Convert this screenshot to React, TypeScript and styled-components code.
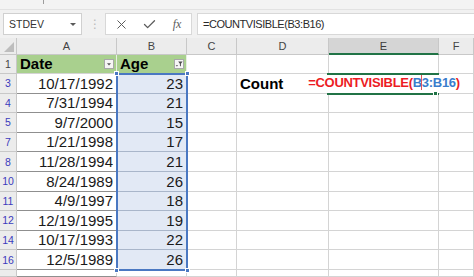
import styled, { createGlobalStyle } from 'styled-components';
import { X, Check } from 'lucide-react';

const GlobalStyle = createGlobalStyle`
  html, body {
    margin: 0;
    padding: 0;
    background: #ffffff;
    overflow: hidden;
  }
  body {
    font-family: 'Liberation Sans', Arial, sans-serif;
  }
`;

interface DataRow {
    n: number;
    date: string;
    age: number;
}

const rows: DataRow[] = [
    { n: 3, date: '10/17/1992', age: 23 },
    { n: 4, date: '7/31/1994', age: 21 },
    { n: 5, date: '9/7/2000', age: 15 },
    { n: 7, date: '1/21/1998', age: 17 },
    { n: 8, date: '11/28/1994', age: 21 },
    { n: 10, date: '8/24/1989', age: 26 },
    { n: 11, date: '4/9/1997', age: 18 },
    { n: 12, date: '12/19/1995', age: 19 },
    { n: 14, date: '10/17/1993', age: 22 },
    { n: 16, date: '12/5/1989', age: 26 },
];

const columns = ['A', 'B', 'C', 'D', 'E', 'F'];

const FilterButton = ({ active }: { active?: boolean }) => (
    <FilterBox viewBox="0 0 10 10" width={10} height={10}>
        <rect x="0.5" y="0.5" width="9" height="9" fill="#f6f6f6" stroke="#a8a8a8" />
        {active ? (
            <>
                <path d="M4.2 2.6h4.4L6.9 4.8v2.6l-1-0.7V4.8z" fill="#4d4d4d" />
                <path d="M1.6 6.2h2.6L2.9 7.6z" fill="#4d4d4d" />
            </>
        ) : (
            <path d="M3 4.2h4L5 6.4z" fill="#555" />
        )}
    </FilterBox>
);

const App = () => {
    return (
        <Page>
            <GlobalStyle />
            <Ribbon>
                <RibbonTick />
            </Ribbon>
            <FormulaBar>
                <NameBox>
                    STDEV
                    <Caret />
                </NameBox>
                <Grip>⋮</Grip>
                <FxBox>
                    <IconSlot>
                        <X size={15} strokeWidth={1.6} color="#5c5c5c" />
                    </IconSlot>
                    <IconSlot>
                        <Check size={15} strokeWidth={2.1} color="#5c5c5c" />
                    </IconSlot>
                    <IconSlot>
                        <Fx>fx</Fx>
                    </IconSlot>
                </FxBox>
                <FormulaInput>=COUNTVISIBLE(B3:B16)</FormulaInput>
            </FormulaBar>

            <Sheet>
                <Corner>
                    <CornerMark />
                </Corner>
                {columns.map((c) => (
                    <ColHead key={c} $active={c === 'E'}>
                        {c}
                    </ColHead>
                ))}

                <RowHead>1</RowHead>
                <TitleCell>
                    Date
                    <FilterButton />
                </TitleCell>
                <TitleCell>
                    Age
                    <FilterButton active />
                </TitleCell>
                <Cell />
                <Cell />
                <Cell />
                <Cell />

                {rows.map((r) => (
                    <Row key={r.n} row={r} />
                ))}

                <RowHead $filtered />
                <Cell $line="#8f8f8f" />
                <Cell />
                <Cell />
                <Cell />
                <Cell />
                <Cell />

                <Selection>
                    <Handle $top $left />
                    <Handle $top />
                    <Handle $left />
                    <Handle />
                </Selection>
                <ActiveCell>
                    <FillHandle />
                </ActiveCell>
            </Sheet>
        </Page>
    );
};

const Row = ({ row }: { row: DataRow }) => {
    const first = row.n === 3;
    return (
        <>
            <RowHead $filtered>{row.n}</RowHead>
            <Cell $align="flex-end" $line="#8f8f8f">
                {row.date}
            </Cell>
            <Cell $align="flex-end" $bg="#e2e9f5" $line="#a9b6ca">
                {row.age}
            </Cell>
            <Cell />
            <Cell $noRight={first}>{first && <Label>Count</Label>}</Cell>
            <Cell $noRight={first} $align={first ? 'center' : undefined}>
                {first && (
                    <FormulaText>
                        =COUNTVISIBLE(<RefText>B<Cursor />3:B16</RefText>)
                    </FormulaText>
                )}
            </Cell>
            <Cell />
        </>
    );
};

export default App;

const Page = styled.div`
    width: 474px;
    height: 277px;
    overflow: hidden;
    background: #ffffff;
    display: flex;
    flex-direction: column;
`;

const Ribbon = styled.div`
    height: 10px;
    background: #f3f3f3;
    border-bottom: 1px solid #e2e2e2;
    box-sizing: border-box;
    padding-left: 43px;
`;

const RibbonTick = styled.div`
    width: 1px;
    height: 4px;
    background: #9c9c9c;
`;

const FormulaBar = styled.div`
    height: 28px;
    box-sizing: border-box;
    background: #f1f1f1;
    display: flex;
    align-items: center;
    padding-left: 3px;
`;

const NameBox = styled.div`
    width: 79px;
    height: 22px;
    box-sizing: border-box;
    background: #ffffff;
    border: 1px solid #d0d0d0;
    display: flex;
    align-items: center;
    justify-content: space-between;
    padding: 0 5px 0 5px;
    font-size: 10.5px;
    color: #333333;
`;

const Caret = styled.span`
    width: 0;
    height: 0;
    border-left: 3px solid transparent;
    border-right: 3px solid transparent;
    border-top: 3px solid #5a5a5a;
`;

const Grip = styled.div`
    width: 2px;
    margin: 0 9px 0 12px;
    display: flex;
    justify-content: center;
    font-family: 'DejaVu Sans', sans-serif;
    font-size: 12px;
    color: #b9b9b9;
`;

const FxBox = styled.div`
    width: 87px;
    height: 22px;
    box-sizing: border-box;
    background: #ffffff;
    border: 1px solid #d8d8d8;
    display: flex;
    align-items: center;
    gap: 12px;
    padding-left: 7px;
`;

const IconSlot = styled.div`
    width: 16px;
    flex: none;
    display: flex;
    justify-content: center;
    align-items: center;
    & > svg {
        flex: none;
    }
`;

const Fx = styled.span`
    font-family: 'Liberation Serif', 'Times New Roman', serif;
    font-style: italic;
    font-size: 12px;
    color: #5c5c5c;
`;

const FormulaInput = styled.div`
    flex: 1;
    margin-left: 5px;
    height: 22px;
    box-sizing: border-box;
    background: #ffffff;
    border: 1px solid #d8d8d8;
    border-right: none;
    display: flex;
    align-items: center;
    padding-left: 5px;
    font-size: 11px;
    letter-spacing: -0.45px;
    color: #2a2a2a;
`;

const Sheet = styled.div`
    position: relative;
    flex: 1;
    display: grid;
    grid-template-columns: 17px 100px 70px 50px 92px 110px 1fr;
    grid-template-rows: 17px 19px repeat(10, 19.6px) 1fr;
    background: #ffffff;
`;

const Corner = styled.div`
    background: #ececec;
    border-right: 1px solid #c8c8c8;
    border-bottom: 1px solid #c8c8c8;
    display: flex;
    justify-content: flex-end;
    align-items: flex-end;
    padding: 0 2px 2px 0;
`;

const CornerMark = styled.div`
    width: 10px;
    height: 10px;
    background: #bdbdbd;
    clip-path: polygon(100% 0, 100% 100%, 0 100%);
`;

const ColHead = styled.div<{ $active?: boolean }>`
    background: ${(p) => (p.$active ? '#d5d5d5' : '#ececec')};
    border-right: 1px solid #c8c8c8;
    border-bottom: ${(p) => (p.$active ? '2px solid #217346' : '1px solid #c8c8c8')};
    display: flex;
    align-items: center;
    justify-content: center;
    font-size: 11px;
    color: ${(p) => (p.$active ? '#3a3a3a' : '#444444')};
`;

const RowHead = styled.div<{ $filtered?: boolean }>`
    background: #ececec;
    border-right: 1px solid #c8c8c8;
    border-bottom: 1px solid #c8c8c8;
    display: flex;
    align-items: center;
    justify-content: center;
    font-size: 10.5px;
    color: ${(p) => (p.$filtered ? '#3b3bbd' : '#444444')};
`;

interface CellProps {
    $align?: 'flex-start' | 'flex-end' | 'center';
    $bg?: string;
    $line?: string;
    $noRight?: boolean;
}

const Cell = styled.div<CellProps>`
    min-width: 0;
    box-sizing: border-box;
    display: flex;
    align-items: flex-end;
    justify-content: ${(p) => p.$align || 'flex-start'};
    padding: 0 3px 1px 3px;
    background: ${(p) => p.$bg || 'transparent'};
    border-right: ${(p) => (p.$noRight ? 'none' : '1px solid #d4d4d4')};
    border-bottom: ${(p) => `1px solid ${p.$line || '#d4d4d4'}`};
    font-size: 15px;
    line-height: 17px;
    color: #1a1a1a;
    white-space: nowrap;
`;

const TitleCell = styled.div`
    box-sizing: border-box;
    background: #a9d08e;
    border-right: 1px solid #e8efe3;
    border-bottom: 1px solid #d4d4d4;
    display: flex;
    align-items: flex-end;
    justify-content: space-between;
    padding: 0 2px 1px 3px;
    font-size: 15px;
    font-weight: bold;
    line-height: 17px;
    color: #000000;
`;

const FilterBox = styled.svg`
    margin-bottom: 3px;
    flex: none;
`;

const Label = styled.span`
    font-weight: bold;
    color: #000000;
`;

const FormulaText = styled.span`
    font-size: 13px;
    font-weight: bold;
    letter-spacing: -0.3px;
    color: #ec1c24;
    margin-bottom: 1px;
`;

const RefText = styled.span`
    color: #3a7dcc;
`;

const Cursor = styled.span`
    display: inline-block;
    width: 1px;
    height: 15px;
    margin: 0 -0.5px;
    vertical-align: -3px;
    background: #e0535a;
`;

const Selection = styled.div`
    position: absolute;
    grid-column: 3 / 4;
    grid-row: 3 / 13;
    top: -1px;
    bottom: -1px;
    left: -1px;
    right: -1px;
    border: 2px solid #4a78c2;
    pointer-events: none;
`;

const Handle = styled.div<{ $top?: boolean; $left?: boolean }>`
    position: absolute;
    width: 3px;
    height: 3px;
    background: #4a78c2;
    border: 1px solid #ffffff;
    ${(p) => (p.$top ? 'top: -4px;' : 'bottom: -4px;')}
    ${(p) => (p.$left ? 'left: -4px;' : 'right: -4px;')}
`;

const ActiveCell = styled.div`
    position: absolute;
    grid-column: 6 / 7;
    grid-row: 3 / 4;
    top: -1px;
    bottom: -1px;
    left: -2px;
    right: 0;
    border-top: 2px solid #217346;
    border-bottom: 2px solid #217346;
    pointer-events: none;
`;

const FillHandle = styled.div`
    position: absolute;
    width: 3px;
    height: 3px;
    right: 1px;
    bottom: -3px;
    background: #217346;
    border: 1px solid #ffffff;
`;
